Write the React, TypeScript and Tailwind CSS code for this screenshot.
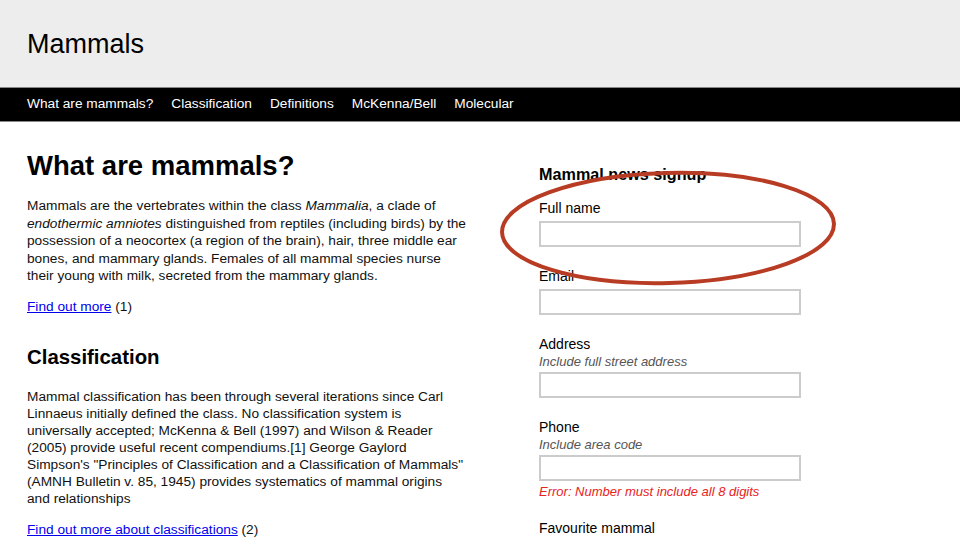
import React from "react";

const nav = ["What are mammals?", "Classification", "Definitions", "McKenna/Bell", "Molecular"];

function Field({ label, hint, error }: { label: string; hint?: string; error?: string }) {
  return (
    <div className="mb-[20px]">
      <label className="block text-[14px] leading-[18px] text-black">{label}</label>
      {hint && <div className="text-[13px] leading-[18px] italic text-[#555]">{hint}</div>}
      <input className={`${hint ? "mt-[1px]" : "mt-[4px]"} block w-[262px] h-[26px] border-2 border-[#ccc] bg-white outline-none`} />
      {error && <div className="mt-[2px] text-[13px] leading-[18px] italic text-[#e8231c]">{error}</div>}
    </div>
  );
}

export default function App() {
  return (
    <div className="relative w-[960px] h-[540px] overflow-hidden bg-white text-[#111]" style={{ fontFamily: '"Liberation Sans", Arial, sans-serif' }}>
      {/* Header */}
      <header className="h-[87px] bg-[#ededed] px-[27px] pt-[28px]">
        <h1 className="text-[27px] leading-[32px] text-black">Mammals</h1>
      </header>

      {/* Nav */}
      <nav className="h-[35px] bg-black border-y border-[#888] flex items-center gap-[18px] px-[27px]">
        {nav.map((n) => (
          <span key={n} className="text-white text-[13.7px]">{n}</span>
        ))}
      </nav>

      {/* Content */}
      <main className="flex px-[27px] pt-[28px]">
        <section className="w-[440px] shrink-0 text-[13.7px]">
          <h2 className="text-[27.5px] leading-[32px] font-bold text-black">What are mammals?</h2>
          <p className="mt-[15px] leading-[17.5px]">
            Mammals are the vertebrates within the class <i>Mammalia</i>, a clade of <i>endothermic amniotes</i> distinguished from reptiles (including birds) by the possession of a neocortex (a region of the brain), hair, three middle ear bones, and mammary glands. Females of all mammal species nurse their young with milk, secreted from the mammary glands.
          </p>
          <p className="mt-[13px] leading-[17.5px]">
            <a href="#" className="text-[#0000ee] underline">Find out more</a> (1)
          </p>

          <h2 className="mt-[30px] text-[20.4px] leading-[24px] font-bold text-black">Classification</h2>
          <p className="mt-[19px] leading-[17px]">
            Mammal classification has been through several iterations since Carl Linnaeus initially defined the class. No classification system is universally accepted; McKenna &amp; Bell (1997) and Wilson &amp; Reader (2005) provide useful recent compendiums.[1] George Gaylord Simpson's "Principles of Classification and a Classification of Mammals" (AMNH Bulletin v. 85, 1945) provides systematics of mammal origins and relationships
          </p>
          <p className="mt-[14px] leading-[17.5px]">
            <a href="#" className="text-[#0000ee] underline">Find out more about classifications</a> (2)
          </p>
        </section>

        <aside className="ml-[72px] pt-[14px]">
          <h3 className="text-[16.2px] leading-[20px] font-bold text-black mb-[15px]">Mammal news signup</h3>
          <Field label="Full name" />
          <Field label="Email" />
          <Field label="Address" hint="Include full street address" />
          <Field label="Phone" hint="Include area code" error="Error: Number must include all 8 digits" />
          <label className="block -mt-[2px] text-[14px] leading-[18px] text-black">Favourite mammal</label>
        </aside>
      </main>

      {/* Annotation */}
      <svg className="absolute left-0 top-0 pointer-events-none" width="960" height="540">
        <ellipse cx="668" cy="228" rx="166" ry="55" transform="rotate(-1.5 668 228)" fill="none" stroke="#b83c24" strokeWidth="4" />
      </svg>
    </div>
  );
}
